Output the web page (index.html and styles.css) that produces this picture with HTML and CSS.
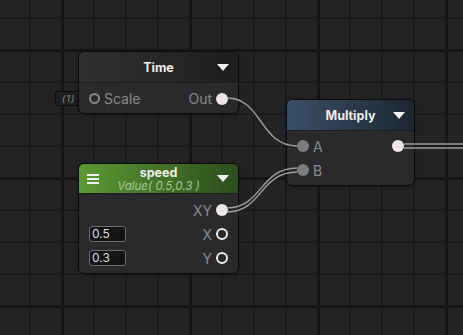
FILE: index.html
```html
<!DOCTYPE html>
<html>
<head>
<meta charset="utf-8">
<link rel="stylesheet" href="styles.css">
</head>
<body>
<div class="canvas">
  <div class="badge">(1)</div>

  <div class="node node-time">
    <div class="header header-time">
      <span></span>
      <span class="title">Time</span>
      <span class="caret"></span>
    </div>
    <div class="body">
      <div class="row">
        <span class="port port-hollow-gray"></span>
        <span class="label">Scale</span>
        <span class="spacer"></span>
        <span class="label">Out</span>
        <span class="port port-white"></span>
      </div>
    </div>
  </div>

  <div class="node node-mult">
    <div class="header header-mult">
      <span></span>
      <span class="title">Multiply</span>
      <span class="caret"></span>
    </div>
    <div class="body body-mult">
      <div class="row">
        <span class="port port-gray"></span>
        <span class="label">A</span>
        <span class="spacer"></span>
        <span class="port port-white"></span>
      </div>
      <div class="row">
        <span class="port port-gray"></span>
        <span class="label">B</span>
        <span class="spacer"></span>
      </div>
    </div>
  </div>

  <div class="node node-speed">
    <div class="header header-speed">
      <span class="menu"><i></i><i></i><i></i></span>
      <span class="titles">
        <span class="title">speed</span>
        <span class="subtitle">Value( 0.5,0.3 )</span>
      </span>
      <span class="caret"></span>
    </div>
    <div class="body body-speed">
      <div class="row">
        <span class="spacer"></span>
        <span class="label">XY</span>
        <span class="port port-white"></span>
      </div>
      <div class="row">
        <span class="field">0.5</span>
        <span class="spacer"></span>
        <span class="label">X</span>
        <span class="port port-hollow-white"></span>
      </div>
      <div class="row">
        <span class="field">0.3</span>
        <span class="spacer"></span>
        <span class="label">Y</span>
        <span class="port port-hollow-white"></span>
      </div>
    </div>
  </div>

  <svg class="wires" width="463" height="335" viewBox="0 0 463 335">
    <g fill="none" stroke="#9d9d9d" stroke-width="1.4">
      <path d="M227 98 C262 98 260 146 297 146"/>
      <path d="M227 208 C262 208 260 168 297 168"/>
      <path d="M227 212 C262 212 260 172 297 172"/>
      <path d="M404 144 L463 144"/>
      <path d="M404 148 L463 148"/>
    </g>
  </svg>
</div>
</body>
</html>
```

FILE: styles.css
```css
* { box-sizing: border-box; }

html, body {
  margin: 0;
  padding: 0;
  background: #222225;
}

.canvas {
  position: relative;
  width: 463px;
  height: 335px;
  overflow: hidden;
  font-family: Inter, "Noto Sans", "Liberation Sans", sans-serif;
  background-color: #232326;
  background-image:
    linear-gradient(to right, #151517 3px, transparent 3px),
    linear-gradient(to bottom, #151517 3px, transparent 3px),
    linear-gradient(to right, #1b1b1d 2px, transparent 2px),
    linear-gradient(to bottom, #1b1b1d 2px, transparent 2px);
  background-size: 128px 128px, 128px 128px, 32px 32px, 32px 32px;
  background-position: 61px 0, 0 49px, 29px 0, 0 17px;
}

.wires {
  position: absolute;
  left: 0;
  top: 0;
  pointer-events: none;
}

.badge {
  position: absolute;
  left: 55px;
  top: 91px;
  width: 26px;
  height: 15px;
  border: 1px solid #0e0e0f;
  border-radius: 3px;
  background: #1f1f21;
  color: #8e8e8e;
  font-size: 9px;
  font-style: italic;
  letter-spacing: 1px;
  line-height: 13px;
  padding-left: 6px;
}

.node {
  position: absolute;
  border: 1px solid #0b0b0c;
  border-radius: 6px;
  background: #2a2a2d;
  overflow: hidden;
  box-shadow: 0 1px 3px rgba(0,0,0,0.35);
}

.node-time { left: 78px; top: 51px; width: 161px; height: 63px; }
.node-mult { left: 286px; top: 99px; width: 129px; height: 87px; }
.node-speed { left: 78px; top: 163px; width: 161px; height: 111px; }

.header {
  display: grid;
  grid-template-columns: 1fr auto 1fr;
  align-items: center;
  height: 31px;
  border-bottom: 1px solid #1d1d1f;
  color: #ececec;
}

.header-time { background: linear-gradient(to right, #303030, #1e1e1e); }
.header-mult { background: linear-gradient(to right, #3a5069, #1d2631); }
.header-speed { background: linear-gradient(to right, #5b9a33, #2c4d1d); height: 30px; }

.title {
  font-size: 12.5px;
  font-weight: 700;
  text-align: center;
}

.titles {
  display: flex;
  flex-direction: column;
  align-items: center;
  line-height: 12px;
  padding-top: 1px;
}

.subtitle {
  font-size: 11.5px;
  font-style: italic;
  color: #a8c79a;
  margin-top: 1px;
}

.caret {
  justify-self: end;
  margin-right: 9px;
  width: 0;
  height: 0;
  border-left: 6px solid transparent;
  border-right: 6px solid transparent;
  border-top: 7px solid #f2f2f2;
}

.menu {
  justify-self: start;
  margin-left: 8px;
  display: flex;
  flex-direction: column;
  gap: 2px;
}

.menu i {
  display: block;
  width: 12px;
  height: 2px;
  background: #f0f0f0;
}

.body {
  display: flex;
  flex-direction: column;
}

.body-mult { padding-top: 3px; }
.body-speed { padding-top: 4px; }

.node-time .row { height: 31px; }

.row {
  display: flex;
  align-items: center;
  height: 24px;
  padding: 0 10px;
  gap: 4px;
}

.spacer { flex: 1; }

.label {
  font-size: 14px;
  color: #8a8a8a;
}

.port {
  width: 12px;
  height: 12px;
  border-radius: 50%;
  flex: none;
}

.port-white { background: #ebe7e7; }
.port-gray { background: #7c7c7e; }
.port-hollow-gray { border: 2px solid #878787; width: 11px; height: 11px; }
.port-hollow-white { border: 2.5px solid #ededed; width: 12px; height: 12px; }

.field {
  width: 37px;
  height: 16px;
  border: 1px solid #6d6d6d;
  border-radius: 3px;
  background: #141416;
  color: #dcdcdc;
  font-size: 12px;
  line-height: 14px;
  padding-left: 2px;
}
```
